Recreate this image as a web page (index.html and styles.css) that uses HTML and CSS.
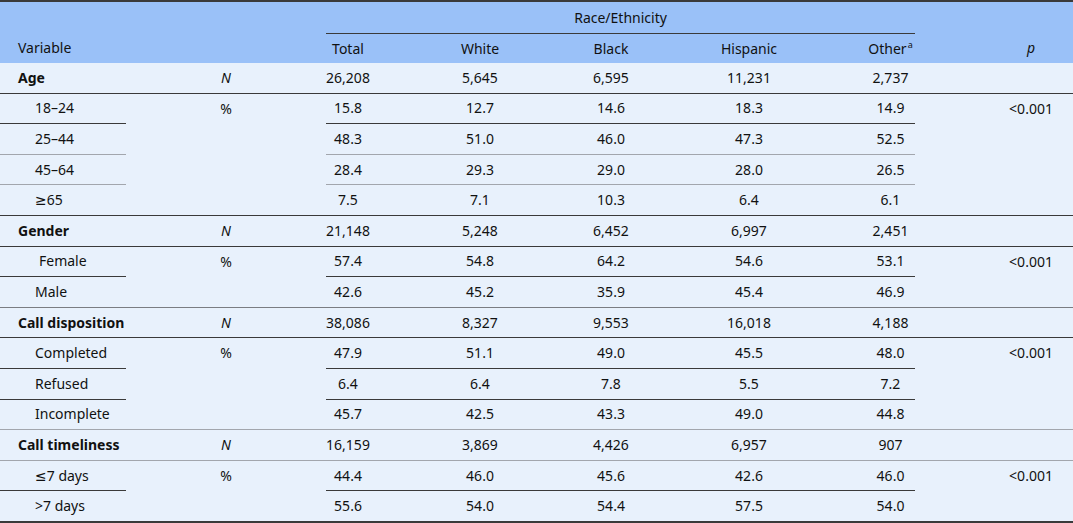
FILE: index.html
```html
<!DOCTYPE html>
<html lang="en">
<head>
<meta charset="utf-8">
<title>Race/Ethnicity table</title>
<link rel="stylesheet" href="styles.css">
</head>
<body>
<table class="tbl">
  <colgroup>
    <col class="c-var">
    <col class="c-unit">
    <col class="c-total">
    <col class="c-white">
    <col class="c-black">
    <col class="c-hisp">
    <col class="c-other">
    <col class="c-p">
  </colgroup>
  <thead>
    <tr class="h1">
      <th></th>
      <th></th>
      <th colspan="5" class="spanner">Race/Ethnicity</th>
      <th></th>
    </tr>
    <tr class="h2">
      <th class="var">Variable</th>
      <th></th>
      <th>Total</th>
      <th>White</th>
      <th>Black</th>
      <th>Hispanic</th>
      <th>Other<sup>a</sup></th>
      <th class="pv"><i>p</i></th>
    </tr>
  </thead>
  <tbody>
    <tr class="grp rule-dark first">
      <td class="var"><b>Age</b></td><td class="unit"><i>N</i></td>
      <td>26,208</td><td>5,645</td><td>6,595</td><td>11,231</td><td>2,737</td><td class="pv"></td>
    </tr>
    <tr class="sub inner rule-dark">
      <td class="var">18–24</td><td class="unit">%</td>
      <td>15.8</td><td>12.7</td><td>14.6</td><td>18.3</td><td>14.9</td><td class="pv">&lt;0.001</td>
    </tr>
    <tr class="sub inner rule-gray">
      <td class="var">25–44</td><td class="unit"></td>
      <td>48.3</td><td>51.0</td><td>46.0</td><td>47.3</td><td>52.5</td><td class="pv"></td>
    </tr>
    <tr class="sub inner rule-gray">
      <td class="var">45–64</td><td class="unit"></td>
      <td>28.4</td><td>29.3</td><td>29.0</td><td>28.0</td><td>26.5</td><td class="pv"></td>
    </tr>
    <tr class="sub rule-dark">
      <td class="var">≥65</td><td class="unit"></td>
      <td>7.5</td><td>7.1</td><td>10.3</td><td>6.4</td><td>6.1</td><td class="pv"></td>
    </tr>

    <tr class="grp rule-dark">
      <td class="var"><b>Gender</b></td><td class="unit"><i>N</i></td>
      <td>21,148</td><td>5,248</td><td>6,452</td><td>6,997</td><td>2,451</td><td class="pv"></td>
    </tr>
    <tr class="sub inner rule-dark">
      <td class="var shift">Female</td><td class="unit">%</td>
      <td>57.4</td><td>54.8</td><td>64.2</td><td>54.6</td><td>53.1</td><td class="pv">&lt;0.001</td>
    </tr>
    <tr class="sub rule-mid">
      <td class="var">Male</td><td class="unit"></td>
      <td>42.6</td><td>45.2</td><td>35.9</td><td>45.4</td><td>46.9</td><td class="pv"></td>
    </tr>

    <tr class="grp rule-dark">
      <td class="var"><b>Call disposition</b></td><td class="unit"><i>N</i></td>
      <td>38,086</td><td>8,327</td><td>9,553</td><td>16,018</td><td>4,188</td><td class="pv"></td>
    </tr>
    <tr class="sub inner rule-dark">
      <td class="var">Completed</td><td class="unit">%</td>
      <td>47.9</td><td>51.1</td><td>49.0</td><td>45.5</td><td>48.0</td><td class="pv">&lt;0.001</td>
    </tr>
    <tr class="sub inner rule-dark">
      <td class="var">Refused</td><td class="unit"></td>
      <td>6.4</td><td>6.4</td><td>7.8</td><td>5.5</td><td>7.2</td><td class="pv"></td>
    </tr>
    <tr class="sub rule-gray">
      <td class="var">Incomplete</td><td class="unit"></td>
      <td>45.7</td><td>42.5</td><td>43.3</td><td>49.0</td><td>44.8</td><td class="pv"></td>
    </tr>

    <tr class="grp rule-gray">
      <td class="var"><b>Call timeliness</b></td><td class="unit"><i>N</i></td>
      <td>16,159</td><td>3,869</td><td>4,426</td><td>6,957</td><td>907</td><td class="pv"></td>
    </tr>
    <tr class="sub inner rule-dark">
      <td class="var">≤7 days</td><td class="unit">%</td>
      <td>44.4</td><td>46.0</td><td>45.6</td><td>42.6</td><td>46.0</td><td class="pv">&lt;0.001</td>
    </tr>
    <tr class="sub last">
      <td class="var">&gt;7 days</td><td class="unit"></td>
      <td>55.6</td><td>54.0</td><td>54.4</td><td>57.5</td><td>54.0</td><td class="pv"></td>
    </tr>
  </tbody>
</table>
</body>
</html>
```

FILE: styles.css
```css
:root {
  --dark: #3a3a3a;
  --mid: #7a7d82;
  --gray: #a2a6ad;
  --head: #9ac1f8;
  --body: #e8f1fc;
  --ink: #111111;
}

html, body {
  margin: 0;
  padding: 0;
  background: #ffffff;
}

.tbl {
  width: 1073px;
  table-layout: fixed;
  border-collapse: collapse;
  font-family: "Noto Sans", "DejaVu Sans", sans-serif;
  font-size: 14px;
  color: var(--ink);
  border-top: 2px solid var(--dark);
  border-bottom: 2px solid var(--dark);
}

.c-var { width: 126px; }
.c-unit { width: 200px; }
.c-total { width: 44px; }
.c-white { width: 220px; }
.c-black { width: 42px; }
.c-hisp { width: 234px; }
.c-other { width: 49px; }
.c-p { width: 158px; }

.tbl th,
.tbl td {
  padding: 0;
  text-align: center;
  vertical-align: middle;
  white-space: nowrap;
  font-weight: normal;
  line-height: 20px;
}

.tbl thead th {
  background: var(--head);
}

.h1 th { height: 31px; }
.h2 th { height: 29px; }

.spanner {
  border-bottom: 1px solid var(--dark);
}

.tbl sup {
  font-size: 9px;
  line-height: 0;
  vertical-align: 6px;
  margin-left: 1px;
}

.tbl tbody td {
  background: var(--body);
  height: 29.6px;
}

.tbl .var {
  text-align: left;
  padding-left: 18px;
}

.tbl .sub .var {
  padding-left: 35px;
}

.tbl .sub .var.shift {
  padding-left: 39px;
}

.tbl .pv {
  padding-left: 74px;
}

.tbl b {
  font-weight: 700;
}

.rule-dark td { border-bottom: 1px solid var(--dark); }
.rule-gray td { border-bottom: 1px solid var(--gray); }
.rule-mid td { border-bottom: 1px solid var(--mid); }

.inner td.unit,
.inner td.pv {
  border-bottom: none;
}

.last td { border-bottom: none; }
```
